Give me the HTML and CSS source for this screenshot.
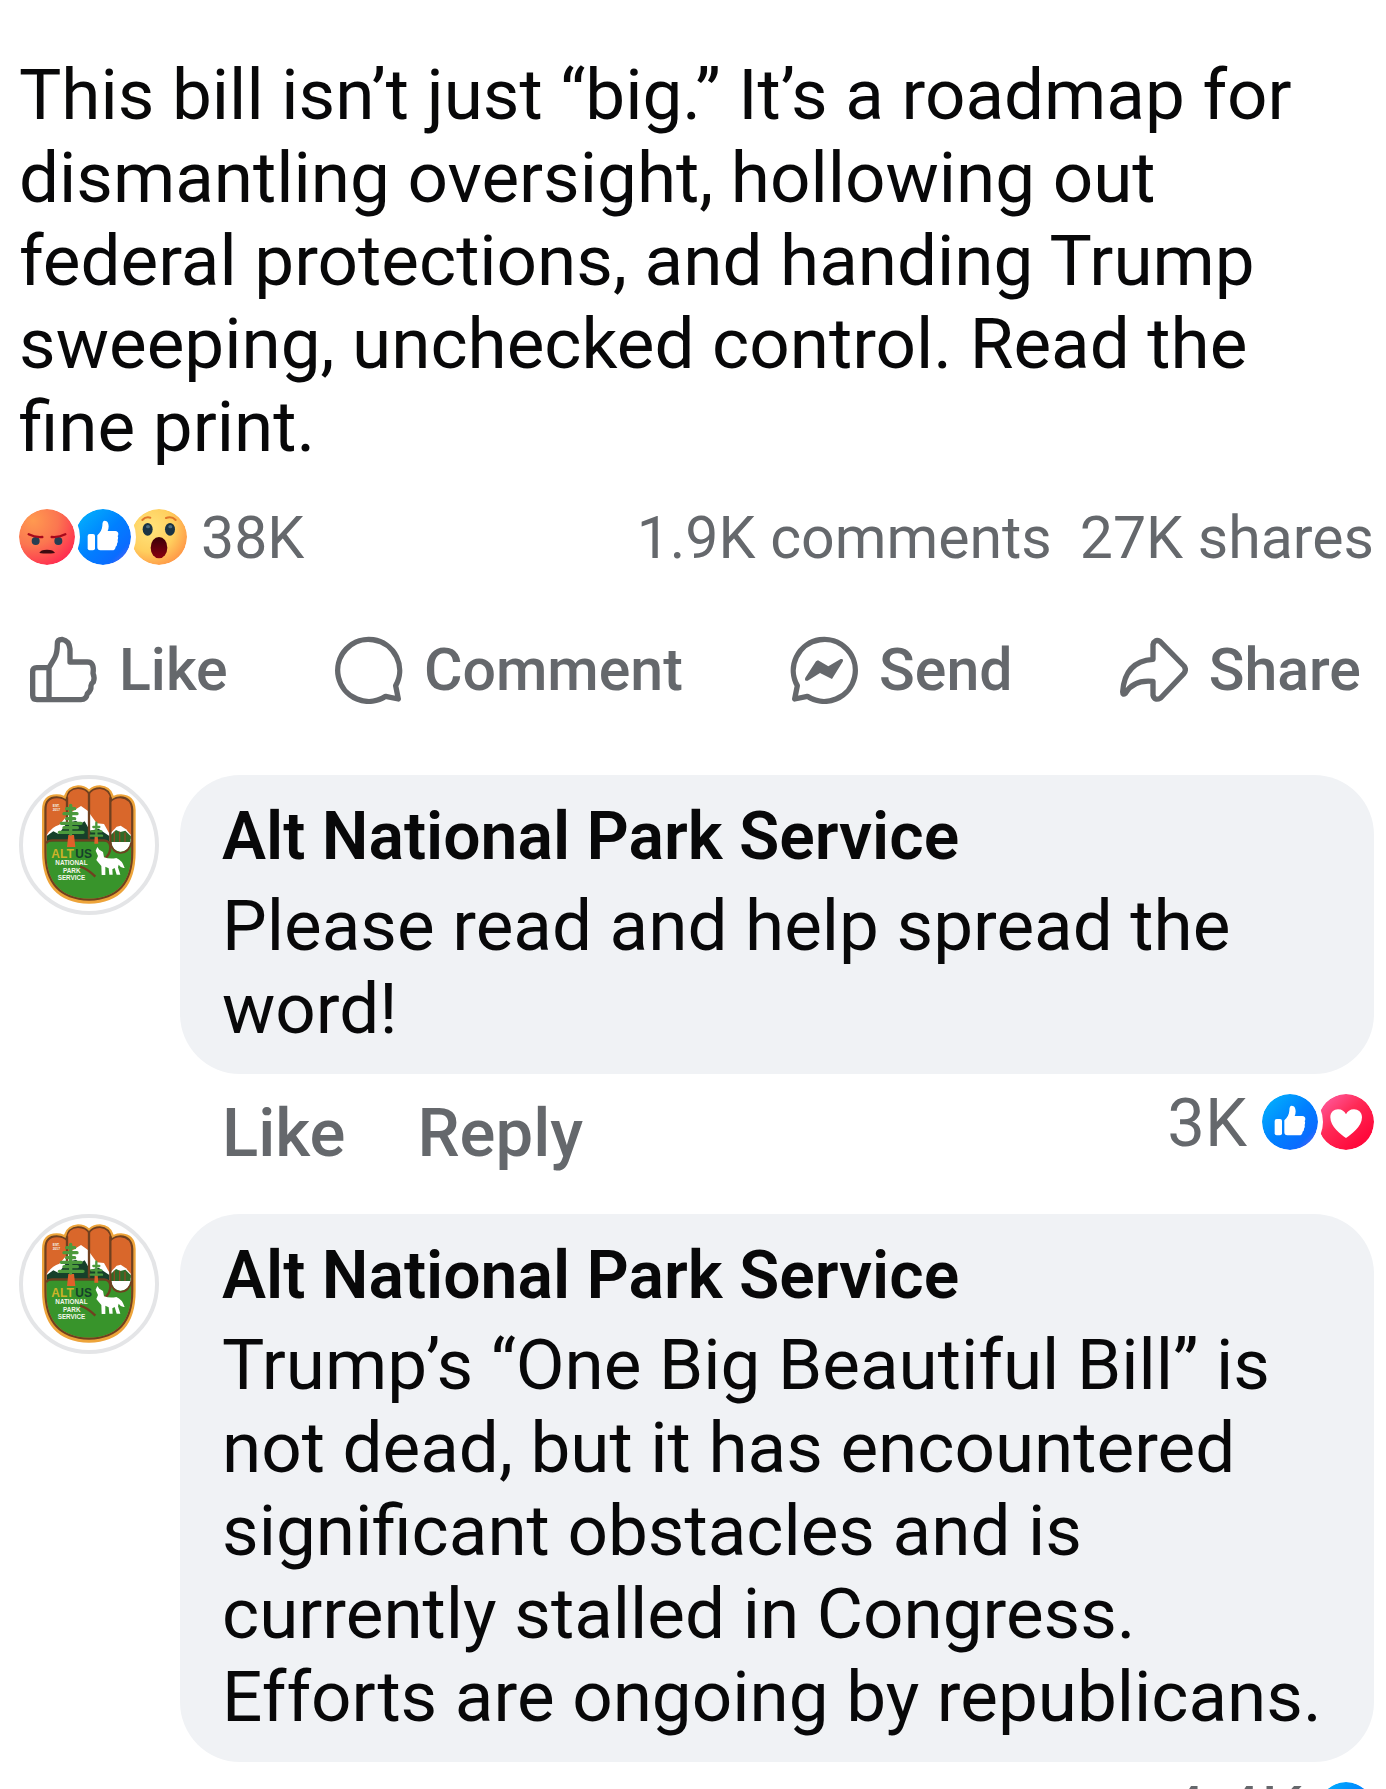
FILE: index.html
```html
<!DOCTYPE html>
<html lang="en">
  <head>
    <meta charset="utf-8">
    <title>Alt National Park Service</title>
    <link rel="stylesheet" href="styles.css">
  </head>
  <body>

    <!-- shared drawings -->
    <svg class="defs" width="0" height="0" aria-hidden="true">
      <defs>
        <linearGradient id="blue" x1="0.1" y1="0.1" x2="0.9" y2="0.9">
          <stop offset="0" stop-color="#02adfc"/>
          <stop offset="0.5" stop-color="#0080ff"/>
          <stop offset="0.85" stop-color="#0a6cff"/>
          <stop offset="1" stop-color="#4a63f5"/>
        </linearGradient>
        <linearGradient id="red" x1="0.1" y1="0" x2="0.8" y2="0.8">
          <stop offset="0" stop-color="#ff60a4"/>
          <stop offset="0.5" stop-color="#ff2a56"/>
          <stop offset="1" stop-color="#ff0a3c"/>
        </linearGradient>
        <radialGradient id="angry" cx="0.25" cy="0.2" r="0.9">
          <stop offset="0" stop-color="#ff9a50"/>
          <stop offset="0.5" stop-color="#fb7650"/>
          <stop offset="1" stop-color="#ff2a50"/>
        </radialGradient>
        <radialGradient id="wow" cx="0.35" cy="0.35" r="0.7">
          <stop offset="0" stop-color="#ffe47c"/>
          <stop offset="0.6" stop-color="#ffcf5e"/>
          <stop offset="1" stop-color="#ff9a48"/>
        </radialGradient>
        <linearGradient id="mouth" x1="0" y1="0" x2="0" y2="1">
          <stop offset="0" stop-color="#3a0008"/>
          <stop offset="1" stop-color="#8a0010"/>
        </linearGradient>
        <symbol id="r-like" viewBox="0 0 168 168">
          <circle cx="84" cy="84" r="84" fill="url(#blue)"/>
          <rect x="38" y="75" width="22" height="49" rx="6" fill="#fff"/>
          <path d="M67 79 C76 71 81 62 82 50 Q82 35 89 35 C98 35 101 44 101 52 Q101 59 98 66 H121 Q130 67 130 75 Q130 79 128 81 Q131 86 128 93 Q130 99 126 104 Q127 110 122 113 Q121 124 111 124 H76 Q67 124 67 115 Z" fill="#fff"/>
        </symbol>
        <symbol id="r-love" viewBox="0 0 168 168">
          <circle cx="84" cy="84" r="84" fill="url(#red)"/>
          <path d="M84 132 C68 122 37 98 37 70 C37 54 48 46 60 46 C72 46 80 52 84 61 C88 52 96 46 108 46 C120 46 132 54 132 70 C132 98 100 122 84 132 Z" fill="#fff"/>
        </symbol>
        <symbol id="r-angry" viewBox="0 0 168 168">
          <circle cx="84" cy="84" r="84" fill="url(#angry)"/>
          <ellipse cx="50" cy="96" rx="12" ry="12" fill="#263e52"/>
          <ellipse cx="118" cy="96" rx="12" ry="12" fill="#263e52"/>
          <path d="M29 76 Q48 86 70 84 M139 76 Q120 86 98 84" fill="none" stroke="#a8081c" stroke-width="7" stroke-linecap="round"/>
          <path d="M61 132 Q64 122 84 122 Q104 122 108 132 Q84 135 61 132 Z" fill="#3c0a10"/>
        </symbol>
        <symbol id="r-wow" viewBox="0 0 168 168">
          <circle cx="84" cy="84" r="84" fill="url(#wow)"/>
          <ellipse cx="50" cy="61" rx="15" ry="19" fill="#1a3344"/>
          <ellipse cx="117" cy="61" rx="15" ry="19" fill="#1a3344"/>
          <ellipse cx="51" cy="53" rx="6" ry="5" fill="#4c6c80"/>
          <ellipse cx="118" cy="53" rx="6" ry="5" fill="#4c6c80"/>
          <path d="M34 33 Q44 22 58 26 M105 27 Q122 20 134 33" fill="none" stroke="#e0762a" stroke-width="6" stroke-linecap="round"/>
          <ellipse cx="84" cy="116" rx="25" ry="32" fill="url(#mouth)"/>
        </symbol>

        <clipPath id="hand">
          <path d="M139 150 Q139 115 170 115 Q190 115 202 128 V118 Q204 88 234 87 Q257 87 267 106 Q277 87 300 87 Q328 90 331 118 V128 Q343 115 361 115 Q392 117 394 150 V275 Q394 412 267 416 Q139 412 139 275 Z"/>
        </clipPath>
        <symbol id="avatar" viewBox="57 45 420 420">
          <circle cx="267" cy="255" r="204" fill="#fff" stroke="#e4e5e7" stroke-width="12"/>
          <path d="M126 150 Q126 104 170 103 Q182 103 192 107 Q202 78 234 76 Q254 76 267 88 Q280 76 300 76 Q332 78 341 107 Q351 103 363 103 Q406 105 407 150 V275 Q407 427 267 431 Q126 427 126 275 Z" fill="#eda43a"/>
          <path d="M133 150 Q133 109 170 109 Q186 109 197 117 Q202 84 234 82 Q256 82 267 96 Q278 82 300 82 Q330 84 336 117 Q347 109 361 109 Q398 111 400 150 V275 Q400 418 267 422 Q133 418 133 275 Z" fill="#70401f"/>
          <g clip-path="url(#hand)">
            <rect x="130" y="80" width="280" height="340" fill="#d9672b"/>
            <path d="M140 226 Q155 200 178 194 L208 160 L243 138 L263 152 L290 190 L312 192 L330 224 V245 H140 Z" fill="#fff"/>
            <path d="M140 228 L160 214 L176 222 L200 190 L228 182 L240 192 L254 184 L270 212 L296 206 L310 216 L328 228 V250 H140 Z" fill="#16402a"/>
            <path d="M333 218 L350 200 L362 197 L378 208 L392 224 V246 H333 Z" fill="#fff"/>
            <path d="M333 243 V224 L348 210 L361 216 L376 212 L392 228 V243 Z" fill="#2f6a27"/>
            <rect x="130" y="244" width="280" height="180" fill="#38942b"/>
            <path d="M333 236 H394 V246 Q386 274 361 275 Q337 272 333 246 Z" fill="#fff"/>
            <path d="M333 246 V228 H392 V246 Z" fill="#2f6a27"/>
          </g>
          <path d="M139 250 Q143 241 158 241 H312 Q331 243 331 262 Q331 284 314 296 M201 112 V190 M267 100 V236 M331 112 V265" fill="none" stroke="#70401f" stroke-width="7"/>
          <path d="M331 246 Q337 278 361 279 Q388 278 394 246" fill="none" stroke="#70401f" stroke-width="5"/>
          <path d="M343 215 V246 M359 215 V246 M375 218 V246" stroke="#8a4a24" stroke-width="4"/>
          <path d="M205 225 H222 L226 261 H201 Z M284 228 H293 L295 251 H283 Z" fill="#e0602a"/>
          <path d="M212 136 V222 M200 146 H224 M192 161 H231 M200 176 H224 M184 190 H243 M192 203 H232 M178 217 H249" stroke="#4c9a3c" stroke-width="10" stroke-linecap="round"/>
          <path d="M289 188 V228 M280 201 H298 M274 214 H304 M272 227 H306" stroke="#4c9a3c" stroke-width="7" stroke-linecap="round"/>
          <path d="M240 320 Q262 326 286 350" fill="none" stroke="#70401f" stroke-width="7"/>
          <path d="M292 261 L298 269 L309 276 L312 292 Q330 298 349 294 Q366 300 374 324 Q364 326 356 314 L354 322 L361 344 H350 L344 324 L337 328 L338 344 H328 L326 325 L316 320 V345 H305 L304 318 L289 300 L294 288 L287 272 Z" fill="#fff"/>
          <g font-family="Liberation Sans, sans-serif" font-weight="bold" fill="#f4f6ea">
            <text x="154" y="294" font-size="36" fill="#cdb32a">ALT</text>
            <text x="226" y="294" font-size="36" fill="#16402a">US</text>
            <text x="166" y="316" font-size="19">NATIONAL</text>
            <text x="189" y="338" font-size="19">PARK</text>
            <text x="173" y="361" font-size="19">SERVICE</text>
            <text x="158" y="142" font-size="10">EST.</text>
            <text x="158" y="153" font-size="10">2017</text>
          </g>
        </symbol>
      </defs>
    </svg>

    <main class="feed">
      <p class="post-text">This bill isn’t just “big.” It’s a roadmap for dismantling oversight, hollowing out federal protections, and handing Trump sweeping, unchecked control. Read the fine print.</p>

      <div class="stats">
        <div class="reactions">
          <svg class="reaction"><use href="#r-angry"/></svg>
          <svg class="reaction"><use href="#r-like"/></svg>
          <svg class="reaction"><use href="#r-wow"/></svg>
        </div>
        <span class="reaction-count">38K</span>
        <a href="#comments">1.9K comments</a>
        <a href="#shares">27K shares</a>
      </div>

      <div class="actions">
        <button type="button">
          <svg class="icon" viewBox="90 46 204 204"><path d="M147 141 H110 Q98 141 98 153 V224 Q98 237 111 237 H243 Q259 237 262 219 Q274 210 273 195 Q274 188 280 184 Q285 172 279 158 Q284 124 262 124 H210 V85 Q208 60 186 56 Q172 56 172 69 Q172 98 164 112 L147 141 Z M147 141 V237"/></svg>
          Like
        </button>
        <button type="button">
          <svg class="icon" viewBox="1006 48 204 204"><path d="M1188 197 A93 93 0 1 0 1158 229 L1196 237 Z"/></svg>
          Comment
        </button>
        <button type="button">
          <svg class="icon" viewBox="0 0 204 204"><path d="M22 149 A93 93 0 1 1 52 181 L14 189 Z"/><path class="solid" d="M84 73 L115 91 L152 69 Q162 67 158 77 L126 129 L90 111 L53 134 Q42 136 46 125 L78 76 Z"/></svg>
          Send
        </button>
        <button type="button">
          <svg class="icon" viewBox="0 0 204 204"><path d="M99 70 V26 Q104 8 120 16 L192 90 Q200 100 192 112 L122 186 Q104 196 99 178 V136 Q40 130 16 172 Q8 178 8 168 Q14 76 99 70 Z"/></svg>
          Share
        </button>
      </div>

      <section class="comments" id="comments">
        <article class="comment">
          <svg class="avatar"><use href="#avatar"/></svg>
          <div class="comment-body">
            <div class="bubble">
              <h2>Alt National Park Service</h2>
              <p>Please read and help spread the word!</p>
            </div>
            <div class="comment-footer">
              <button type="button">Like</button>
              <button type="button">Reply</button>
              <span class="count">3K</span>
              <div class="reactions">
                <svg class="reaction"><use href="#r-like"/></svg>
                <svg class="reaction"><use href="#r-love"/></svg>
              </div>
            </div>
          </div>
        </article>

        <article class="comment">
          <svg class="avatar"><use href="#avatar"/></svg>
          <div class="comment-body">
            <div class="bubble">
              <h2>Alt National Park Service</h2>
              <p>Trump’s “One Big Beautiful Bill” is not dead, but it has encountered significant obstacles and is currently stalled in Congress. Efforts are ongoing by republicans.</p>
            </div>
            <div class="comment-footer">
              <span class="count">4.4K</span>
              <div class="reactions">
                <svg class="reaction"><use href="#r-like"/></svg>
              </div>
            </div>
          </div>
        </article>
      </section>
    </main>

  </body>
</html>
```

FILE: styles.css
```css
* {
  box-sizing: border-box;
}

body {
  margin: 0;
  background: #fff;
  color: #080809;
  font-family: Roboto, sans-serif;
}

.defs {
  position: absolute;
}

.feed {
  height: 100vh;
  overflow: hidden;
  padding: 53px 12px 0 19px;
}

p,
h2 {
  margin: 0;
}

p {
  font-size: 71px;
  line-height: 83px;
}

button {
  padding: 0;
  border: 0;
  background: none;
  color: #65686c;
  font-family: inherit;
  font-weight: 500;
  cursor: pointer;
}

/* reactions and counters */
.stats {
  display: flex;
  align-items: center;
  margin-top: 35px;
  height: 68px;
  color: #65686c;
  font-size: 59px;
}

.stats a {
  color: inherit;
  text-decoration: none;
  margin-left: 28px;
}

.reaction-count {
  margin: 0 auto 0 14px;
}

.reactions {
  display: flex;
}

.reaction {
  position: relative;
  width: 56px;
  height: 56px;
  border-radius: 50%;
  box-shadow: 0 0 0 5px #fff;
}

.reaction:nth-child(1) {
  z-index: 3;
}

.reaction:nth-child(2) {
  z-index: 2;
}

/* action bar */
.actions {
  display: flex;
  justify-content: space-between;
  margin-top: 65px;
  padding: 0 13px 0 11px;
}

.actions button {
  display: flex;
  align-items: center;
  gap: 21px;
  font-size: 59px;
  line-height: 68px;
}

.icon {
  width: 68px;
  height: 68px;
}

.icon path {
  fill: none;
  stroke: #65686c;
  stroke-width: 16;
  stroke-linejoin: round;
}

.icon .solid {
  fill: #65686c;
  stroke: none;
}

/* comments */
.comments {
  margin-top: 71px;
}

.comment {
  display: flex;
  gap: 21px;
}

.avatar {
  flex: none;
  width: 140px;
  height: 140px;
}

.comment-body {
  flex: 1;
}

.bubble {
  padding: 26px 42px 24px;
  border-radius: 60px;
  background: #f0f2f5;
}

.bubble h2 {
  margin-bottom: 11px;
  font-size: 66px;
  font-weight: 600;
  line-height: 72px;
}

.comment-footer {
  display: flex;
  align-items: flex-start;
  height: 140px;
  padding: 20px 0 0 42px;
  color: #65686c;
}

.comment-footer button {
  margin-right: 72px;
  font-size: 67px;
  line-height: 78px;
}

.count {
  margin: 0 15px 0 auto;
  font-size: 67px;
  line-height: 58px;
}
```
